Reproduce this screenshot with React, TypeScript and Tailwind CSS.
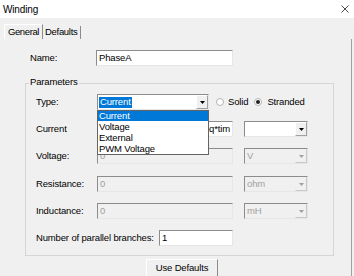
import React from "react";

const font = { fontFamily: '"Liberation Sans", Arial, sans-serif' };

function Arrow({ disabled }: { disabled?: boolean }) {
  return (
    <svg width="5" height="3" viewBox="0 0 5 3">
      <path d="M0 0 H5 L2.5 3 Z" fill={disabled ? "#a0a0a0" : "#000"} />
    </svg>
  );
}

function TextBox({ value, disabled, className }: { value: string; disabled?: boolean; className: string }) {
  return (
    <div
      className={`h-[16px] flex items-center px-[2px] border border-t-[#8c8c8c] border-l-[#8c8c8c] border-r-[#e6e6e6] border-b-[#e6e6e6] ${
        disabled ? "bg-[#f0f0f0] text-[#a0a0a0]" : "bg-white text-black"
      } ${className} overflow-hidden whitespace-nowrap leading-none`}
    >
      {value}
    </div>
  );
}

function Combo({ value, disabled, className, highlighted }: { value: string; disabled?: boolean; className: string; highlighted?: boolean }) {
  return (
    <div
      className={`h-[16px] flex items-center border border-t-[#8c8c8c] border-l-[#8c8c8c] border-r-[#e6e6e6] border-b-[#e6e6e6] ${
        disabled ? "bg-[#f0f0f0] text-[#a0a0a0]" : "bg-white text-black"
      } ${className}`}
    >
      <div className="flex-1 h-full flex items-center pl-[1px] overflow-hidden whitespace-nowrap leading-none">
        {highlighted ? (
          <span className="bg-[#0078d7] text-white h-[11px] flex items-center px-[1px]">{value}</span>
        ) : (
          <span className="px-[1px]">{value}</span>
        )}
      </div>
      <div
        className={`w-[12px] h-[14px] flex items-center justify-center border ${
          disabled ? "border-[#f0f0f0] border-r-[#c8c8c8] border-b-[#c8c8c8] bg-[#f0f0f0]" : "border-white border-r-[#a0a0a0] border-b-[#a0a0a0] bg-[#f0f0f0]"
        }`}
      >
        <Arrow disabled={disabled} />
      </div>
    </div>
  );
}

function Radio({ checked }: { checked?: boolean }) {
  return (
    <div className="w-[8px] h-[8px] rounded-full border border-[#b4b4b4] bg-white flex items-center justify-center">
      {checked && <div className="w-[4px] h-[4px] rounded-full bg-[#222]" />}
    </div>
  );
}

export default function App() {
  return (
    <div
      className="w-[354px] h-[276px] bg-[#f0f0f0] overflow-hidden flex flex-col text-[9.5px] tracking-[-0.15px] text-black whitespace-nowrap"
      style={font}
    >
      <div className="h-[18px] bg-white flex items-center justify-between pl-[3px] pr-[5px] shrink-0">
        <span className="text-[10px]">Winding</span>
        <svg width="8" height="8" viewBox="0 0 8 8">
          <path d="M0.5 0.5 L7.5 7.5 M7.5 0.5 L0.5 7.5" stroke="#333" strokeWidth="0.9" />
        </svg>
      </div>
      <div className="flex items-end pl-[4px] h-[21px] shrink-0">
        <div className="h-[15px] w-[39px] pl-[3px] flex items-center border-t border-l border-t-[#ffffff] border-l-[#ffffff] border-r border-r-[#8c8c8c] tracking-[-0.4px]">
          General
        </div>
        <div className="h-[13px] w-[38px] pl-[2px] flex items-center border-r border-r-[#8c8c8c] tracking-[-0.3px]">
          Defaults
        </div>
      </div>
      <div className="flex-1 w-[352px] border-r border-r-[#a0a0a0] flex flex-col">
        <div className="flex items-center h-[16px] mt-[11px]">
          <span className="w-[96px] pl-[30px]">Name:</span>
          <TextBox value="PhaseA" className="w-[137px]" />
        </div>
        <div className="ml-[25px] w-[309px] mt-[17px] border border-[#d5d5d5] relative pt-[10px] pb-[9px]">
          <span className="absolute left-[3px] top-[-7px] bg-[#f0f0f0] px-[1px] leading-none">Parameters</span>
          <div className="flex flex-col pl-[10px]">
            <div className="flex items-center h-[16px]">
              <span className="w-[61px]">Type:</span>
              <Combo value="Current" highlighted className="w-[112px]" />
              <div className="flex items-center ml-[7px]">
                <Radio />
                <span className="ml-[4px] text-[#000]">Solid</span>
                <div className="ml-[6px]">
                  <Radio checked />
                </div>
                <span className="ml-[5px]">Stranded</span>
              </div>
            </div>
            <div className="flex items-center h-[16px] mt-[11px]">
              <span className="w-[61px]">Current</span>
              <TextBox value="eq*tim" className="w-[136px] justify-end" />
              <Combo value="" className="w-[64px] ml-[11px]" />
            </div>
            <div className="flex items-center h-[16px] mt-[11px]">
              <span className="w-[61px]">Voltage:</span>
              <TextBox value="0" disabled className="w-[136px]" />
              <Combo value="V" disabled className="w-[64px] ml-[11px]" />
            </div>
            <div className="flex items-center h-[16px] mt-[12px]">
              <span className="w-[61px]">Resistance:</span>
              <TextBox value="0" disabled className="w-[136px]" />
              <Combo value="ohm" disabled className="w-[64px] ml-[11px]" />
            </div>
            <div className="flex items-center h-[16px] mt-[11px]">
              <span className="w-[61px]">Inductance:</span>
              <TextBox value="0" disabled className="w-[136px]" />
              <Combo value="mH" disabled className="w-[64px] ml-[11px]" />
            </div>
            <div className="flex items-center h-[16px] mt-[11px]">
              <span className="w-[123px]">Number of parallel branches:</span>
              <TextBox value="1" className="w-[74px]" />
            </div>
          </div>
          <div className="absolute left-[71px] top-[26px] w-[112px] h-[45px] bg-white border border-[#646464] flex flex-col leading-none z-20">
            <div className="h-[10px] bg-[#0078d7] text-white flex items-center pl-[1px]">Current</div>
            <div className="h-[11px] flex items-center pl-[1px]">Voltage</div>
            <div className="h-[11px] flex items-center pl-[1px]">External</div>
            <div className="h-[11px] flex items-center pl-[1px]">PWM Voltage</div>
          </div>
        </div>
        <div className="flex mt-[3px] pl-[146px]">
          <div className="w-[72px] h-[20px] border-t border-l border-r border-t-[#ffffff] border-l-[#ffffff] border-r-[#8c8c8c] flex items-center justify-center pb-[3px]">
            Use Defaults
          </div>
        </div>
      </div>
    </div>
  );
}
